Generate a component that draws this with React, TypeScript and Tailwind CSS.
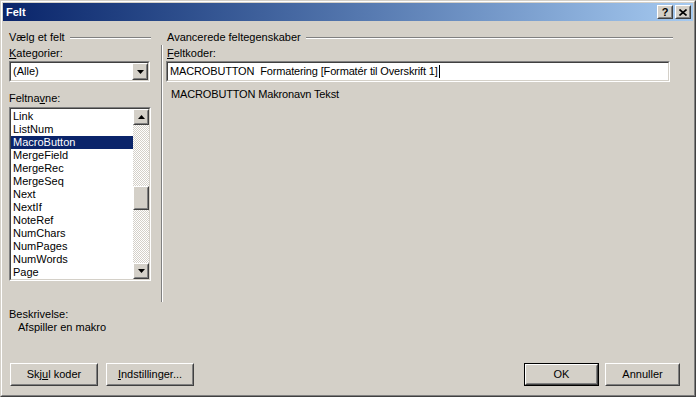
import React from "react";

// Word 2000-dialog "Felt" i Windows-klassisk stil.

const FONT = { fontFamily: '"Liberation Sans", Arial, sans-serif' };

const ITEMS = [
  "Link",
  "ListNum",
  "MacroButton",
  "MergeField",
  "MergeRec",
  "MergeSeq",
  "Next",
  "NextIf",
  "NoteRef",
  "NumChars",
  "NumPages",
  "NumWords",
  "Page",
];

function Sunken({ className, children }: { className?: string; children: React.ReactNode }) {
  return (
    <div className={"border border-t-[#808080] border-l-[#808080] border-b-white border-r-white " + (className ?? "")}>
      <div className="h-full w-full border border-t-[#404040] border-l-[#404040] border-b-[#d4d0c8] border-r-[#d4d0c8] bg-white">
        {children}
      </div>
    </div>
  );
}

function Raised({ className, children }: { className?: string; children: React.ReactNode }) {
  return (
    <div className={"border border-t-white border-l-white border-b-[#404040] border-r-[#404040] bg-[#d4d0c8] " + (className ?? "")}>
      <div className="h-full w-full border border-t-[#d4d0c8] border-l-[#d4d0c8] border-b-[#808080] border-r-[#808080] flex items-center justify-center">
        {children}
      </div>
    </div>
  );
}

function Arrow({ down }: { down?: boolean }) {
  return (
    <svg width="7" height="4" viewBox="0 0 7 4" className="block">
      {down ? <polygon points="0,0 7,0 3.5,4" fill="#000" /> : <polygon points="0,4 7,4 3.5,0" fill="#000" />}
    </svg>
  );
}

function GroupHeader({ label, width }: { label: string; width: string }) {
  return (
    <div className={"flex items-center h-[13px] " + width}>
      <span className="leading-[13px] whitespace-nowrap">{label}</span>
      <div className="flex-1 ml-[5px] mt-[1px]">
        <div className="h-px bg-[#808080]" />
        <div className="h-px bg-white" />
      </div>
    </div>
  );
}

function Button({ children, w, isDefault }: { children: React.ReactNode; w: string; isDefault?: boolean }) {
  const inner = (
    <Raised className="h-full w-full">
      <span className="text-[11px] text-black leading-none">{children}</span>
    </Raised>
  );
  return isDefault ? (
    <div className={"h-[23px] border border-black " + w}>{inner}</div>
  ) : (
    <div className={"h-[23px] " + w}>{inner}</div>
  );
}

export default function App() {
  return (
    <div style={FONT} className="w-[696px] h-[397px] overflow-hidden text-[11px] text-black">
      <div className="h-full border border-t-[#d4d0c8] border-l-[#d4d0c8] border-b-[#404040] border-r-[#404040]">
        <div className="h-full border border-t-white border-l-white border-b-[#808080] border-r-[#808080] bg-[#d4d0c8] p-px flex flex-col">
          {/* titellinje */}
          <div className="h-[18px] flex items-center bg-gradient-to-r from-[#0a246a] to-[#a6caf0] pl-[3px] pr-[2px]">
            <span className="text-white font-bold text-[11px] leading-none">Felt</span>
            <div className="ml-auto flex gap-[2px]">
              <Raised className="w-[16px] h-[14px]">
                <span className="font-bold text-[11px] leading-none">?</span>
              </Raised>
              <Raised className="w-[16px] h-[14px]">
                <svg width="8" height="7" viewBox="0 0 8 7" className="block">
                  <path d="M0.5 0.5 L7.5 6.5 M7.5 0.5 L0.5 6.5" stroke="#000" strokeWidth="1.6" />
                </svg>
              </Raised>
            </div>
          </div>

          {/* indhold */}
          <div className="flex-1 flex flex-col pt-[10px]">
            <div className="flex">
              {/* venstre */}
              <div className="ml-[6px] w-[142px] flex flex-col">
                <GroupHeader label="Vælg et felt" width="w-[142px]" />
                <div className="mt-[3px] h-[13px] leading-[13px]">
                  <u>K</u>ategorier:
                </div>
                <Sunken className="mt-[1px] h-[21px] w-[141px]">
                  <div className="flex h-full items-center">
                    <span className="pl-[2px] leading-[13px]">(Alle)</span>
                    <Raised className="ml-auto w-[16px] h-[17px]">
                      <Arrow down />
                    </Raised>
                  </div>
                </Sunken>
                <div className="mt-[10px] h-[13px] leading-[13px]">
                  Feltna<u>v</u>ne:
                </div>
                <Sunken className="mt-[2px] h-[174px] w-[142px]">
                  <div className="flex h-full">
                    <div className="flex-1 flex flex-col pt-px">
                      {ITEMS.map((it) => (
                        <div
                          key={it}
                          className={
                            "h-[13px] leading-[13px] pl-[2px] " +
                            (it === "MacroButton" ? "bg-[#0a246a] text-white" : "")
                          }
                        >
                          {it}
                        </div>
                      ))}
                    </div>
                    <div className="w-[16px] flex flex-col bg-[repeating-conic-gradient(#ffffff_0_25%,#d4d0c8_0_50%)] bg-[length:2px_2px]">
                      <Raised className="w-[16px] h-[16px]">
                        <Arrow />
                      </Raised>
                      <div className="h-[61px]" />
                      <Raised className="w-[16px] h-[24px]">
                        <span />
                      </Raised>
                      <Raised className="mt-auto w-[16px] h-[16px]">
                        <Arrow down />
                      </Raised>
                    </div>
                  </div>
                </Sunken>
              </div>

              {/* lodret skillelinje */}
              <div className="ml-[10px] mt-[14px] h-[257px] flex">
                <div className="w-px bg-[#808080]" />
                <div className="w-px bg-white" />
              </div>

              {/* højre */}
              <div className="ml-[3px] w-[507px] flex flex-col">
                <GroupHeader label="Avancerede feltegenskaber" width="w-[507px] pl-px" />
                <div className="mt-[3px] h-[13px] leading-[13px] pl-px">
                  <u>F</u>eltkoder:
                </div>
                <Sunken className="mt-[1px] h-[21px] w-[504px]">
                  <div className="flex h-full items-center pl-[2px]">
                    <span className="leading-[13px] whitespace-pre tracking-[-0.15px]">
                      MACROBUTTON  Formatering [Formatér til Overskrift 1]
                    </span>
                    <span className="ml-px w-px h-[13px] bg-black" />
                  </div>
                </Sunken>
                <div className="mt-[6px] h-[13px] leading-[13px] pl-[5px] tracking-[-0.15px]">
                  MACROBUTTON Makronavn Tekst
                </div>
              </div>
            </div>

            <div className="ml-[6px] mt-[6px] h-[13px] leading-[13px]">Beskrivelse:</div>
            <div className="ml-[15px] h-[13px] leading-[13px]">Afspiller en makro</div>

            <div className="mt-[29px] flex pl-[7px] pr-[13px]">
              <Button w="w-[88px]">
                Skj<u>u</u>l koder
              </Button>
              <div className="ml-[8px]">
                <Button w="w-[88px]">
                  <u>I</u>ndstillinger...
                </Button>
              </div>
              <div className="ml-auto flex gap-[6px]">
                <Button w="w-[75px]" isDefault>
                  OK
                </Button>
                <Button w="w-[75px]">Annuller</Button>
              </div>
            </div>
          </div>
        </div>
      </div>
    </div>
  );
}
